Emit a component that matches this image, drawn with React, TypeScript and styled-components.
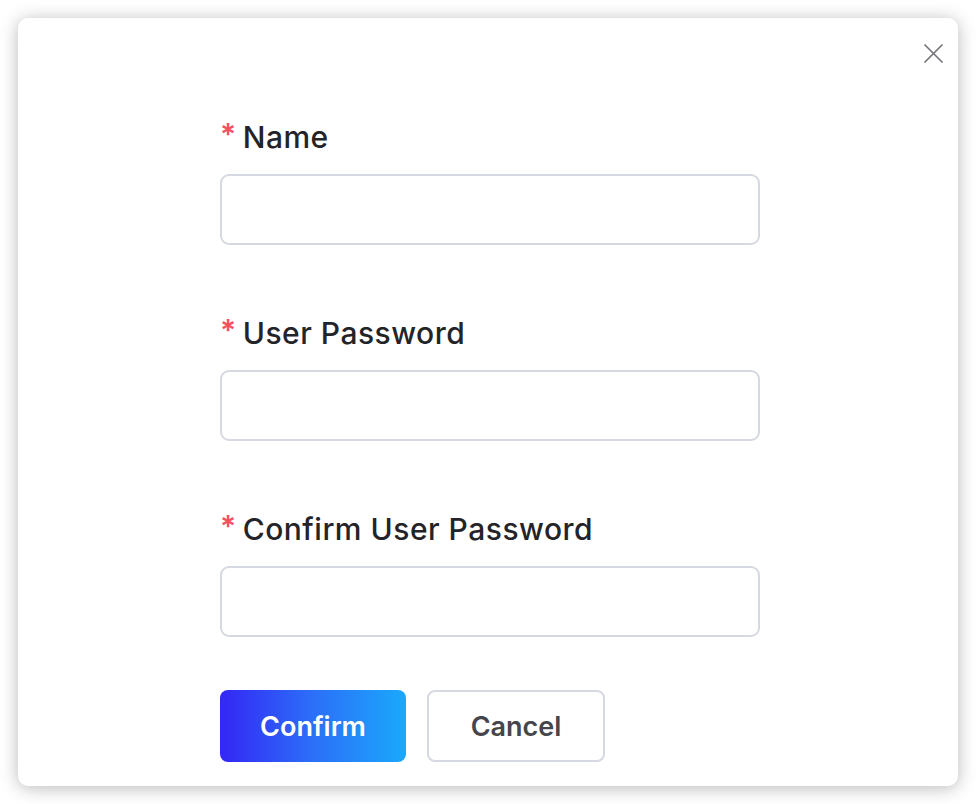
import React from "react";
import styled, { createGlobalStyle } from "styled-components";

const GlobalStyle = createGlobalStyle`
  html, body {
    margin: 0;
    padding: 0;
    background: #ffffff;
    font-family: Inter, "Noto Sans", "Liberation Sans", sans-serif;
  }
`;

const Page = styled.div`
  padding: 18px;
  width: 976px;
  height: 804px;
  box-sizing: border-box;
`;

const Card = styled.div`
  position: relative;
  width: 940px;
  height: 768px;
  box-sizing: border-box;
  background: #ffffff;
  border-radius: 10px;
  box-shadow: 0 2px 18px rgba(0, 0, 0, 0.28);
  padding: 99px 0 0 202px;
`;

const CloseButton = styled.button`
  position: absolute;
  top: 26px;
  right: 15px;
  width: 19px;
  height: 19px;
  padding: 0;
  border: none;
  background: none;
  color: #74747c;
  display: flex;
  align-items: center;
  justify-content: center;
  cursor: pointer;
`;

const Form = styled.form`
  width: 540px;
  display: flex;
  flex-direction: column;
`;

const Field = styled.div`
  display: flex;
  flex-direction: column;
  gap: 17px;

  & + & {
    margin-top: 68px;
  }
`;

const Label = styled.label`
  display: flex;
  align-items: center;
  height: 40px;
  font-size: 30px;
  font-weight: 500;
  color: #232328;
  letter-spacing: 0.5px;
`;

const Required = styled.span`
  color: #f5515b;
  font-size: 30px;
  font-weight: 600;
  margin-right: 6px;
  margin-top: -6px;
`;

const Input = styled.input`
  width: 540px;
  height: 71px;
  box-sizing: border-box;
  border: 2px solid #d6d9e1;
  border-radius: 9px;
  background: #ffffff;
  font-family: inherit;
  font-size: 26px;
  padding: 0 18px;
  outline: none;
`;

const Actions = styled.div`
  display: flex;
  gap: 21px;
  margin-top: 53px;
`;

const Button = styled.button<{ $primary?: boolean; $width: number }>`
  width: ${({ $width }) => $width}px;
  height: 72px;
  box-sizing: border-box;
  border-radius: 8px;
  font-family: inherit;
  font-size: 27px;
  font-weight: 600;
  cursor: pointer;
  border: ${({ $primary }) => ($primary ? "none" : "2px solid #d6d9e1")};
  color: ${({ $primary }) => ($primary ? "#ffffff" : "#45454c")};
  background: ${({ $primary }) =>
    $primary ? "linear-gradient(90deg, #3427f5 0%, #2c6ff8 50%, #1aa9fb 100%)" : "#ffffff"};
`;

const fields = ["Name", "User Password", "Confirm User Password"];

export default function App() {
  return (
    <>
      <GlobalStyle />
      <Page>
        <Card>
          <CloseButton type="button" aria-label="Close">
            <svg width="19" height="19" viewBox="0 0 19 19" fill="none">
              <path
                d="M1 1L18 18M18 1L1 18"
                stroke="currentColor"
                strokeWidth="1.7"
                strokeLinecap="round"
              />
            </svg>
          </CloseButton>
          <Form onSubmit={(e) => e.preventDefault()}>
            {fields.map((name, i) => (
              <Field key={name}>
                <Label htmlFor={`field-${i}`}>
                  <Required>*</Required>
                  {name}
                </Label>
                <Input id={`field-${i}`} type={i === 0 ? "text" : "password"} />
              </Field>
            ))}
            <Actions>
              <Button type="submit" $primary $width={186}>
                Confirm
              </Button>
              <Button type="button" $width={178}>
                Cancel
              </Button>
            </Actions>
          </Form>
        </Card>
      </Page>
    </>
  );
}
